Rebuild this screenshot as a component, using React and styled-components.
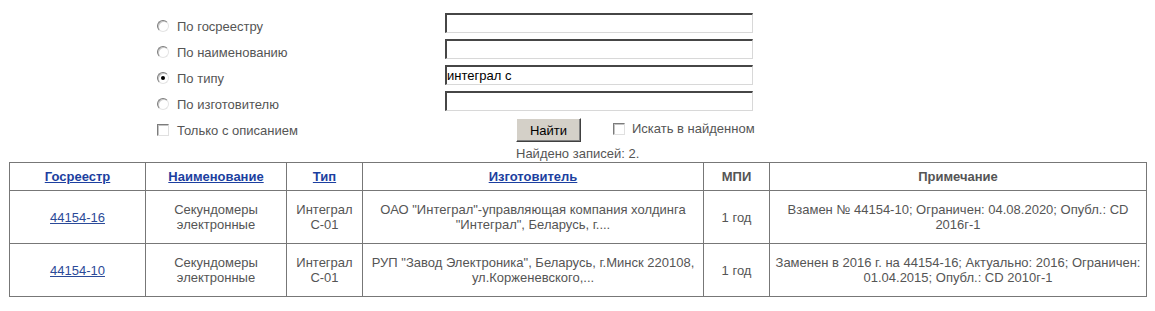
import React from "react";
import styled, { createGlobalStyle } from "styled-components";

const Global = createGlobalStyle`
  body {
    margin: 8px;
    background: #fff;
    font-family: "Liberation Sans", Arial, sans-serif;
    font-size: 13px;
    color: #555;
  }
`;

const Form = styled.div`
  padding-top: 5px;
  display: flex;
  flex-direction: column;
`;

const Row = styled.div`
  display: flex;
  height: 26px;
`;

const LeftCell = styled.label`
  width: 288px;
  margin-left: 149px;
  display: flex;
  align-items: center;
  gap: 8px;
  height: 26px;
`;

const Radio = styled.span`
  box-sizing: border-box;
  width: 12px;
  height: 12px;
  border-radius: 50%;
  border: 1px solid;
  border-color: #7c7c7c #e4e4e4 #e4e4e4 #7c7c7c;
  box-shadow: inset 1px 1px 0 #c8c8c8;
  background: #fff;
  display: flex;
  align-items: center;
  justify-content: center;
  &::after {
    content: "";
    width: 4px;
    height: 4px;
    border-radius: 50%;
    background: ${(p) => (p.$checked ? "#000" : "transparent")};
  }
`;

const Check = styled.span`
  box-sizing: border-box;
  width: 12px;
  height: 12px;
  border: 1px solid;
  border-color: #7c7c7c #e0e0e0 #e0e0e0 #7c7c7c;
  box-shadow: inset 1px 1px 0 #c4c4c4;
  background: #fff;
`;

const TextInput = styled.div`
  box-sizing: border-box;
  width: 308px;
  height: 20px;
  border-style: solid;
  border-width: 2px 1px 1px 2px;
  border-color: #464646 #d8d8d8 #d8d8d8 #464646;
  background: #fff;
  color: #000;
  font-size: 13px;
  line-height: 17px;
  white-space: nowrap;
`;

const BottomRow = styled.div`
  display: flex;
  align-items: center;
  height: 26px;
`;

const Button = styled.div`
  box-sizing: border-box;
  margin-left: 71px;
  width: 65px;
  height: 24px;
  background: #d4d0c8;
  border-style: solid;
  border-width: 1px;
  border-color: #fff #404040 #404040 #fff;
  box-shadow: inset -1px -1px 0 #808080;
  color: #000;
  font-size: 13px;
  display: flex;
  align-items: center;
  justify-content: center;
`;

const InlineCheck = styled.label`
  display: flex;
  align-items: center;
  gap: 7px;
  margin-left: 32px;
  margin-top: -3px;
`;

const Found = styled.div`
  margin-left: 508px;
  height: 19px;
  line-height: 21px;
`;

const Table = styled.table`
  border-collapse: collapse;
  width: 1137px;
  margin-left: 1px;
  table-layout: fixed;
`;

const Th = styled.th`
  border: 1px solid #777;
  padding: 6px 4px;
  line-height: 15px;
  font-weight: bold;
  color: #555;
  text-align: center;
`;

const Td = styled.td`
  border: 1px solid #777;
  padding: 11px 3px;
  line-height: 15px;
  text-align: center;
  vertical-align: middle;
  color: #555;
`;

const Link = styled.a`
  color: ${(p) => (p.$strong ? "#1c3fa0" : "#2b4a98")};
  font-weight: ${(p) => (p.$strong ? "bold" : "normal")};
  text-decoration: underline;
`;

const options = [
  { label: "По госреестру", value: "" },
  { label: "По наименованию", value: "" },
  { label: "По типу", value: "интеграл с", checked: true },
  { label: "По изготовителю", value: "" },
];

const rows = [
  {
    reg: "44154-16",
    name: "Секундомеры электронные",
    type: "Интеграл С-01",
    maker: 'ОАО "Интеграл"-управляющая компания холдинга "Интеграл", Беларусь, г....',
    mpi: "1 год",
    note: "Взамен № 44154-10; Ограничен: 04.08.2020; Опубл.: CD 2016г-1",
  },
  {
    reg: "44154-10",
    name: "Секундомеры электронные",
    type: "Интеграл С-01",
    maker: 'РУП "Завод Электроника", Беларусь, г.Минск 220108, ул.Корженевского,...',
    mpi: "1 год",
    note: "Заменен в 2016 г. на 44154-16; Актуально: 2016; Ограничен: 01.04.2015; Опубл.: CD 2010г-1",
  },
];

export default function App() {
  return (
    <>
      <Global />
      <Form>
        {options.map((o) => (
          <Row key={o.label}>
            <LeftCell>
              <Radio $checked={o.checked} />
              {o.label}
            </LeftCell>
            <TextInput>{o.value}</TextInput>
          </Row>
        ))}
        <BottomRow>
          <LeftCell>
            <Check />
            Только с описанием
          </LeftCell>
          <Button>Найти</Button>
          <InlineCheck>
            <Check />
            Искать в найденном
          </InlineCheck>
        </BottomRow>
        <Found>Найдено записей: 2.</Found>
      </Form>
      <Table>
        <colgroup>
          <col style={{ width: 136 }} />
          <col style={{ width: 141 }} />
          <col style={{ width: 76 }} />
          <col style={{ width: 341 }} />
          <col style={{ width: 66 }} />
          <col style={{ width: 377 }} />
        </colgroup>
        <thead>
          <tr>
            <Th><Link $strong href="#">Госреестр</Link></Th>
            <Th><Link $strong href="#">Наименование</Link></Th>
            <Th><Link $strong href="#">Тип</Link></Th>
            <Th><Link $strong href="#">Изготовитель</Link></Th>
            <Th>МПИ</Th>
            <Th>Примечание</Th>
          </tr>
        </thead>
        <tbody>
          {rows.map((r) => (
            <tr key={r.reg}>
              <Td><Link href="#">{r.reg}</Link></Td>
              <Td>{r.name}</Td>
              <Td>{r.type}</Td>
              <Td>{r.maker}</Td>
              <Td>{r.mpi}</Td>
              <Td>{r.note}</Td>
            </tr>
          ))}
        </tbody>
      </Table>
    </>
  );
}
